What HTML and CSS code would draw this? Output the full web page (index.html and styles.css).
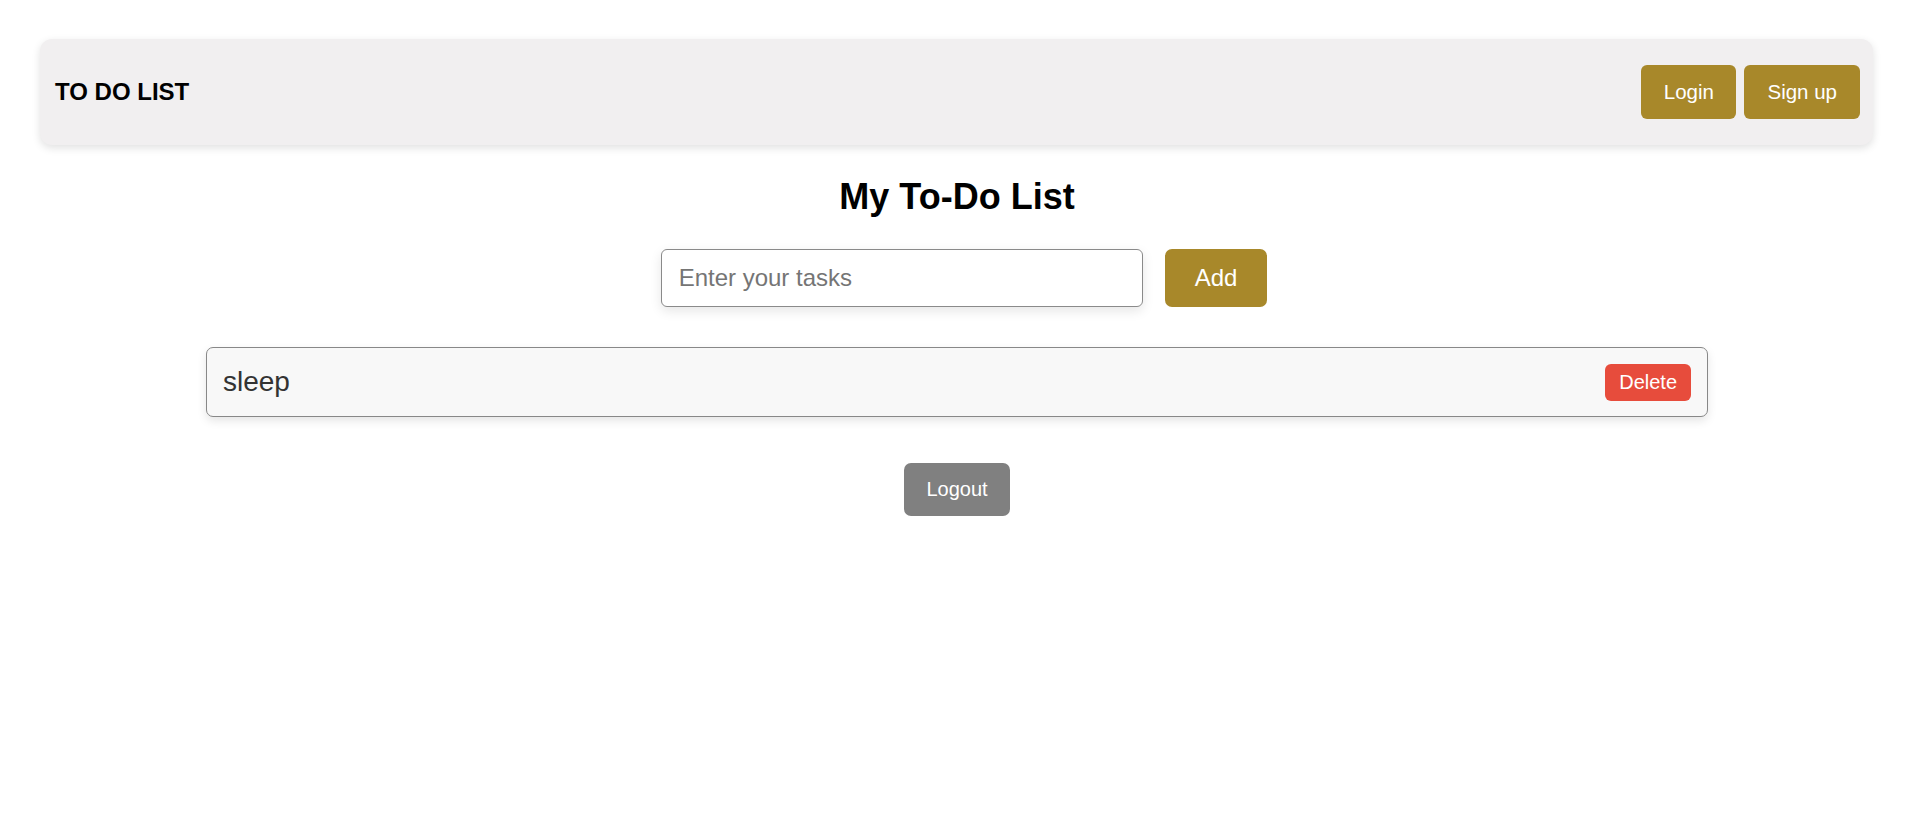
FILE: index.html
```html
<!DOCTYPE html>
<html lang="en">
<head>
<meta charset="utf-8">
<title>To Do List</title>
<link rel="stylesheet" href="styles.css">
</head>
<body>
  <nav class="navbar">
    <div class="brand">TO DO LIST</div>
    <div class="nav-actions">
      <button class="btn btn-gold btn-nav">Login</button>
      <button class="btn btn-gold btn-nav">Sign up</button>
    </div>
  </nav>
  <main class="main">
    <h1 class="title">My To-Do List</h1>
    <div class="add-row">
      <input class="task-input" type="text" placeholder="Enter your tasks">
      <button class="btn btn-gold btn-add">Add</button>
    </div>
    <ul class="task-list">
      <li class="task">
        <span class="task-text">sleep</span>
        <button class="btn btn-delete">Delete</button>
      </li>
    </ul>
    <button class="btn btn-logout">Logout</button>
  </main>
</body>
</html>
```
FILE: styles.css
```css
* { box-sizing: border-box; }

html, body {
  margin: 0;
  background: #ffffff;
}

body {
  font-family: "Liberation Sans", Arial, sans-serif;
  color: #000;
  padding: 39px 43px 0 40px;
}

.navbar {
  height: 106px;
  background: #f1eff0;
  border-radius: 12px;
  box-shadow: 0 3px 8px rgba(0, 0, 0, 0.12);
  display: flex;
  align-items: center;
  justify-content: space-between;
  padding: 0 13px 0 15px;
}

.brand {
  font-size: 24px;
  font-weight: bold;
  color: #000;
}

.nav-actions {
  display: flex;
  gap: 8px;
}

.btn {
  font-family: "Liberation Sans", Arial, sans-serif;
  border: none;
  color: #ffffff;
  cursor: pointer;
  display: flex;
  align-items: center;
  justify-content: center;
}

.btn-gold {
  background: #a8882a;
}

.btn-nav {
  height: 54px;
  font-size: 20.5px;
  padding: 0 23px;
  border-radius: 6px;
}

.btn-nav:first-child {
  padding: 0 22.5px;
}

.main {
  display: flex;
  flex-direction: column;
  align-items: center;
  margin-left: -41px;
  margin-right: -42px;
}

.title {
  font-size: 36px;
  font-weight: bold;
  margin: 32px 0 0;
  line-height: 40px;
}

.add-row {
  display: flex;
  align-items: center;
  gap: 22px;
  margin-top: 32px;
  padding-left: 14px;
}

.task-input {
  width: 482px;
  height: 58px;
  border: 1px solid #8a8a8a;
  border-radius: 6px;
  padding: 0 17px;
  font-family: "Liberation Sans", Arial, sans-serif;
  font-size: 24px;
  color: #333;
  background: #fff;
  box-shadow: 0 4px 12px rgba(0, 0, 0, 0.1);
  outline: none;
}

.task-input::placeholder {
  color: #757575;
}

.btn-add {
  height: 58px;
  font-size: 24px;
  padding: 0 30px;
  border-radius: 7px;
}

.task-list {
  list-style: none;
  margin: 40px 0 0;
  padding: 0;
  width: 1502px;
}

.task {
  height: 70px;
  background: #f8f8f8;
  border: 1px solid #888;
  border-radius: 7px;
  box-shadow: 0 4px 10px rgba(0, 0, 0, 0.1);
  display: flex;
  align-items: center;
  justify-content: space-between;
  padding: 0 16px 0 16px;
}

.task-text {
  font-size: 28px;
  color: #333;
}

.btn-delete {
  background: #e74c3c;
  height: 37px;
  font-size: 20px;
  padding: 0 14px;
  border-radius: 6px;
}

.btn-logout {
  margin-top: 46px;
  background: #808080;
  height: 53px;
  font-size: 20px;
  padding: 0 22px;
  border-radius: 7px;
}
```
